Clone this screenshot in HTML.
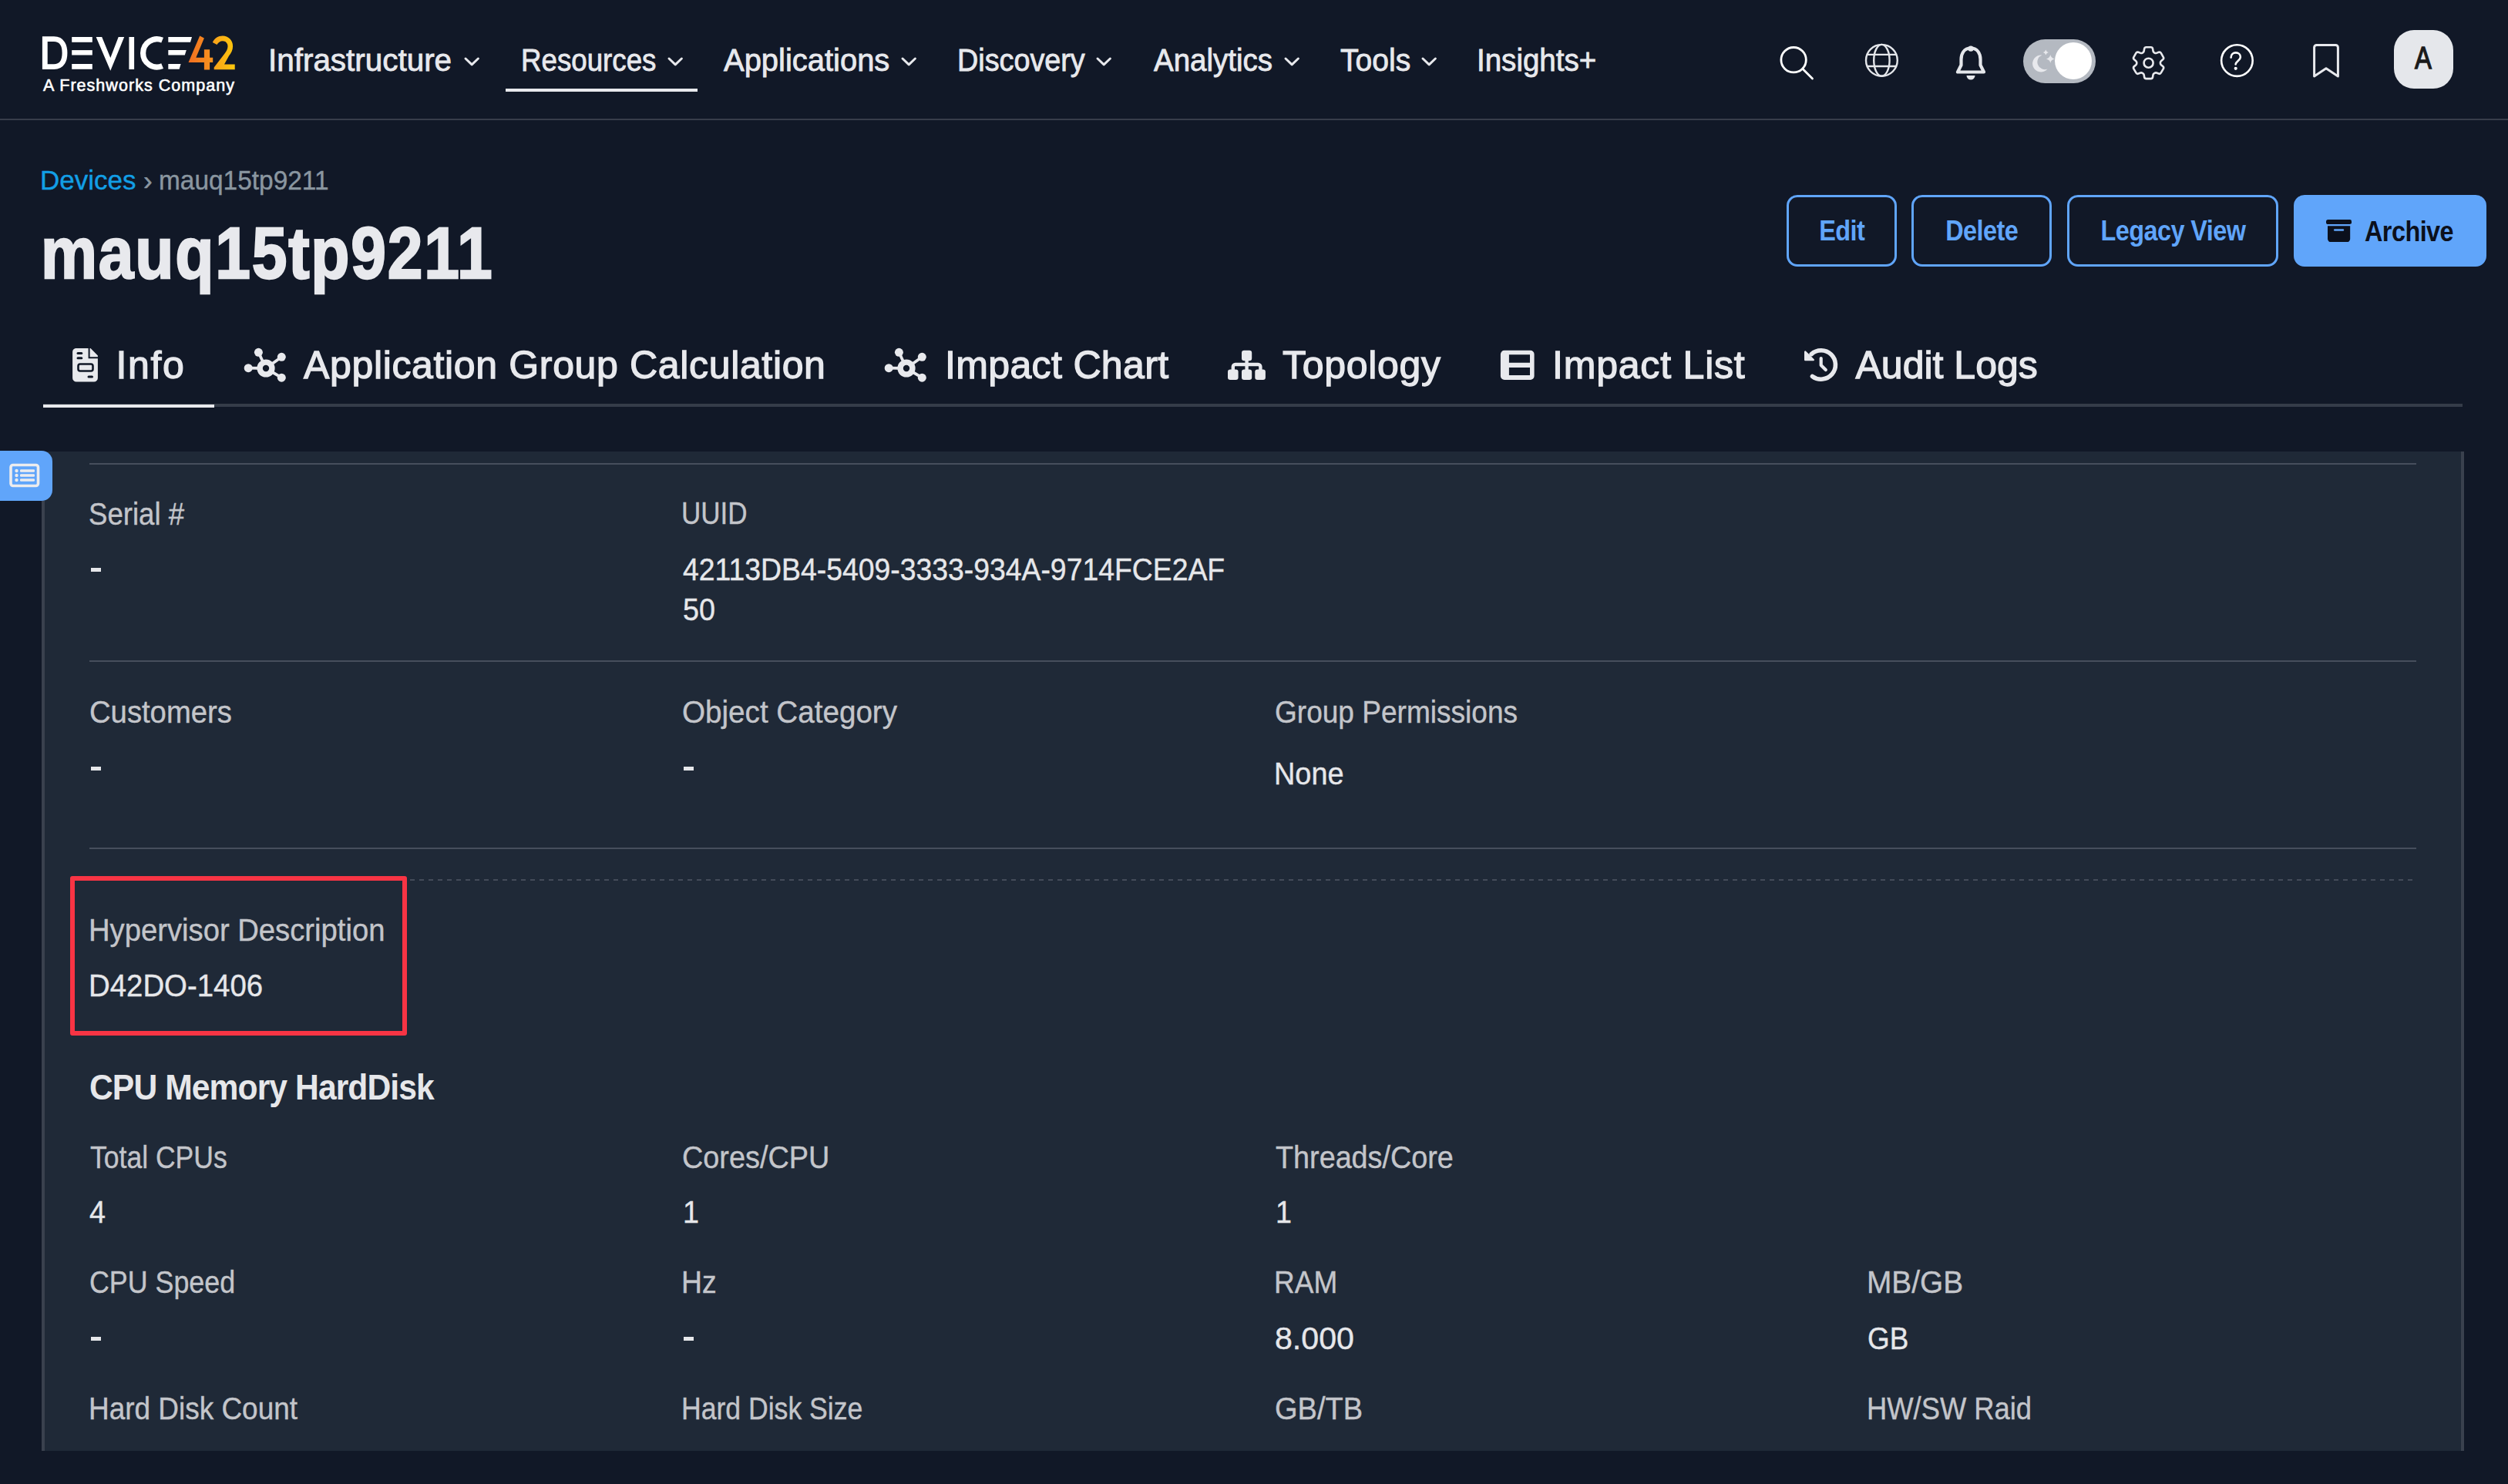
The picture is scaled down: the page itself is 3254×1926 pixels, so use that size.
<!DOCTYPE html>
<html><head><meta charset="utf-8">
<style>
*{margin:0;padding:0;box-sizing:border-box}
html,body{width:3254px;height:1926px;overflow:hidden;background:#111827;font-family:"Liberation Sans",sans-serif;color:#e5e7eb}
.a{position:absolute;white-space:nowrap;line-height:1}
#hdr{position:absolute;left:0;top:0;width:3254px;height:156px;background:#111827;border-bottom:2px solid #383d4a}
.nav{font-size:40px;color:#e8e9ed;-webkit-text-stroke:0.8px #e8e9ed}
.chev{position:absolute;width:22px;height:13px}
.tab{font-size:50px;color:#e8e9ed;-webkit-text-stroke:1.3px #e8e9ed}
.lbl{font-size:41px;color:#c3c5ca;-webkit-text-stroke:0.4px #c3c5ca;transform-origin:0 0}
.val{font-size:41px;color:#e6e7ea;-webkit-text-stroke:0.4px #e6e7ea;transform-origin:0 0}
.btn{position:absolute;top:253px;height:93px;border:3px solid #60a5fa;border-radius:14px;color:#60a5fa;font-weight:bold;font-size:36px;display:flex;align-items:center;justify-content:center}
.btn span{display:inline-block;letter-spacing:-0.6px;transform:scaleX(0.9)}
.hl{position:absolute;left:116px;width:3019px;height:2px;background:#464e5c}
</style></head>
<body>
<div id="hdr"></div>

<!-- logo -->
<svg class="a" style="left:0;top:0" width="320" height="140" viewBox="0 0 320 140">
  <defs>
    <linearGradient id="g4" x1="0" y1="0" x2="1" y2="0">
      <stop offset="0" stop-color="#f26f21"/><stop offset="1" stop-color="#f7931e"/>
    </linearGradient>
    <linearGradient id="g2" x1="0" y1="0" x2="1" y2="0">
      <stop offset="0" stop-color="#f9a11b"/><stop offset="1" stop-color="#fdc70c"/>
    </linearGradient>
  </defs>
  <g fill="#ffffff">
    <path d="M58.3,50.7 H70 C81,50.7 84,60 84,68.7 C84,77.5 81,86.6 70,86.6 H58.3 Z" fill="none" stroke="#fff" stroke-width="6.8"/>
    <rect x="93.2" y="48" width="26.6" height="6.8"/>
    <rect x="93.2" y="65.1" width="26.6" height="6.4"/>
    <rect x="93.2" y="83" width="26.6" height="6.8"/>
    <polygon points="124.6,48 132.2,48 143.3,75.1 153.7,48 161.2,48 143.3,91.8"/>
    <rect x="167.4" y="48" width="6.7" height="42"/>
    <path d="M210.63,52.18 A18.1,18.1 0 1 0 210.63,85.62" fill="none" stroke="#fff" stroke-width="7.2"/>
    <polygon points="218.3,48 249,48 247,54.8 218.3,54.8"/>
    <polygon points="218.3,65.1 241.8,65.1 239.8,71.5 218.3,71.5"/>
    <polygon points="218.3,83 234.6,83 232.6,89.8 218.3,89.8"/>
  </g>
  <path fill="url(#g4)" d="M259.2,46.4 L264.9,49.4 L254.3,74.7 H264.9 V64.2 H272.1 V74.7 H276.2 V81.1 H272.1 V90.6 H264.9 V81.1 H244.5 Z"/>
  <path fill="url(#g2)" d="M275.8,55.1 C278,50 283,46.6 289,46.6 C296,46.6 302.1,52 302.1,60 C302.1,65 300,69 297,72.5 L291,83.6 H304.7 V90.2 H277.7 V87.5 L291.5,69.5 C293.8,66.5 295.5,63.5 295.5,60 C295.5,56 292.8,53.2 289,53.2 C285.5,53.2 282.8,55.3 281.5,58.1 Z"/>
  <text x="56" y="118.4" font-family="Liberation Sans" font-size="21.5" fill="#fff" stroke="#fff" stroke-width="0.6" textLength="248" lengthAdjust="spacing">A Freshworks Company</text>
</svg>

<!-- nav -->
<div class="a nav" style="left:348.0px;top:58px;transform:scaleX(1.0104);transform-origin:0 0">Infrastructure</div>
<div class="a nav" style="left:675.5px;top:58px;transform:scaleX(0.9173);transform-origin:0 0">Resources</div>
<div class="a nav" style="left:938.5px;top:58px;transform:scaleX(0.9982);transform-origin:0 0">Applications</div>
<div class="a nav" style="left:1241.5px;top:58px;transform:scaleX(0.944);transform-origin:0 0">Discovery</div>
<div class="a nav" style="left:1496.5px;top:58px;transform:scaleX(0.9615);transform-origin:0 0">Analytics</div>
<div class="a nav" style="left:1738.5px;top:58px;transform:scaleX(0.9764);transform-origin:0 0">Tools</div>
<div class="a nav" style="left:1916.0px;top:58px;transform:scaleX(0.9629);transform-origin:0 0">Insights+</div>
<svg class="chev" style="left:601.1px;top:72.5px" viewBox="0 0 22 13"><path d="M3,3 L11.2,10.8 L19.4,3" fill="none" stroke="#e8e9ed" stroke-width="3" stroke-linecap="round" stroke-linejoin="round"/></svg>
<svg class="chev" style="left:864.5px;top:72.5px" viewBox="0 0 22 13"><path d="M3,3 L11.2,10.8 L19.4,3" fill="none" stroke="#e8e9ed" stroke-width="3" stroke-linecap="round" stroke-linejoin="round"/></svg>
<svg class="chev" style="left:1168.1px;top:72.5px" viewBox="0 0 22 13"><path d="M3,3 L11.2,10.8 L19.4,3" fill="none" stroke="#e8e9ed" stroke-width="3" stroke-linecap="round" stroke-linejoin="round"/></svg>
<svg class="chev" style="left:1421.3px;top:72.5px" viewBox="0 0 22 13"><path d="M3,3 L11.2,10.8 L19.4,3" fill="none" stroke="#e8e9ed" stroke-width="3" stroke-linecap="round" stroke-linejoin="round"/></svg>
<svg class="chev" style="left:1664.5px;top:72.5px" viewBox="0 0 22 13"><path d="M3,3 L11.2,10.8 L19.4,3" fill="none" stroke="#e8e9ed" stroke-width="3" stroke-linecap="round" stroke-linejoin="round"/></svg>
<svg class="chev" style="left:1843.4px;top:72.5px" viewBox="0 0 22 13"><path d="M3,3 L11.2,10.8 L19.4,3" fill="none" stroke="#e8e9ed" stroke-width="3" stroke-linecap="round" stroke-linejoin="round"/></svg>
<div class="a" style="left:656px;top:115px;width:249px;height:4px;background:#e8e9ed"></div>


<!-- header icons -->
<svg class="a" style="left:2300px;top:50px" width="60" height="60" viewBox="2300 50 60 60">
  <circle cx="2327.1" cy="77.7" r="16.2" fill="none" stroke="#fff" stroke-width="2.8"/>
  <line x1="2339" y1="89.6" x2="2351.5" y2="102" stroke="#fff" stroke-width="2.8" stroke-linecap="round"/>
</svg>
<svg class="a" style="left:2410px;top:45px" width="64" height="66" viewBox="2410 45 64 66">
  <g fill="none" stroke="#e5e7eb" stroke-width="2.4">
    <circle cx="2441.4" cy="78.3" r="20.4"/>
    <ellipse cx="2441.4" cy="78.3" rx="10.2" ry="20.4"/>
    <line x1="2423" y1="70.9" x2="2460" y2="70.9"/>
    <line x1="2423" y1="86" x2="2460" y2="86"/>
  </g>
</svg>
<svg class="a" style="left:2530px;top:50px" width="54" height="60" viewBox="2530 50 54 60">
  <path d="M2557,62.5 C2548,62.5 2544.5,70 2544.5,77 V84.5 L2540,93.5 H2574 L2569.5,84.5 V77 C2569.5,70 2566,62.5 2557,62.5 Z" fill="none" stroke="#e5e7eb" stroke-width="4.2" stroke-linejoin="round"/>
  <circle cx="2557" cy="63.2" r="3.6" fill="#e5e7eb"/>
  <path d="M2551.5,98 H2562.5 A5.5,5.5 0 0 1 2551.5,98 Z" fill="#e5e7eb"/>
</svg>
<div class="a" style="left:2624.7px;top:51px;width:94.3px;height:57px;border-radius:28.5px;background:#b4b9c1"></div>
<div class="a" style="left:2666px;top:55px;width:48px;height:48px;border-radius:50%;background:#ffffff"></div>
<svg class="a" style="left:2630px;top:60px" width="40" height="40" viewBox="2630 60 40 40">
  <path d="M2649.5,71.5 A11,11 0 1 0 2656.5,89.5 A9,9 0 0 1 2649.5,71.5 Z" fill="#e8e9ed"/>
  <path d="M2654.3,64.5 Q2655,67.3 2657.8,68 Q2655,68.7 2654.3,71.5 Q2653.6,68.7 2650.8,68 Q2653.6,67.3 2654.3,64.5 Z" fill="#e8e9ed"/>
  <path d="M2660.3,71 Q2661.2,75.5 2665.7,76.4 Q2661.2,77.3 2660.3,81.8 Q2659.4,77.3 2654.9,76.4 Q2659.4,75.5 2660.3,71 Z" fill="#e8e9ed"/>
</svg>
<svg class="a" style="left:2755px;top:50px" width="66" height="66" viewBox="2755 50 66 66">
  <g transform="translate(2787.6,81.7) scale(2.27) translate(-12,-12)" fill="none" stroke="#e8e9ed" stroke-width="1.15" stroke-linejoin="round">
  <path d="M9.594 3.94c.09-.542.56-.94 1.11-.94h2.593c.55 0 1.02.398 1.11.94l.213 1.281c.063.374.313.686.645.87.074.04.147.083.22.127.325.196.72.257 1.075.124l1.217-.456a1.125 1.125 0 0 1 1.37.49l1.296 2.247a1.125 1.125 0 0 1-.26 1.431l-1.003.827c-.293.241-.438.613-.43.992a7.723 7.723 0 0 1 0 .255c-.008.378.137.75.43.991l1.004.827c.424.35.534.955.26 1.43l-1.298 2.247a1.125 1.125 0 0 1-1.369.491l-1.217-.456c-.355-.133-.75-.072-1.076.124a6.47 6.470 0 0 1-.22.128c-.331.183-.581.495-.644.869l-.213 1.281c-.09.543-.56.94-1.110.94h-2.594c-.55 0-1.019-.398-1.11-.94l-.213-1.281c-.062-.374-.312-.686-.644-.87a6.52 6.52 0 0 1-.22-.127c-.325-.196-.72-.257-1.076-.124l-1.217.456a1.125 1.125 0 0 1-1.369-.49l-1.297-2.247a1.125 1.125 0 0 1 .26-1.431l1.004-.827c.292-.24.437-.613.43-.991a6.932 6.932 0 0 1 0-.255c.007-.38-.138-.751-.43-.992l-1.004-.827a1.125 1.125 0 0 1-.26-1.43l1.297-2.247a1.125 1.125 0 0 1 1.37-.491l1.216.456c.356.133.751.072 1.076-.124.072-.044.146-.086.22-.128.332-.183.582-.495.644-.869l.214-1.28Z"/>
  <circle cx="12" cy="12" r="2.65"/>
  </g>
</svg>
<svg class="a" style="left:2875px;top:51px" width="56" height="56" viewBox="2875 51 56 56">
  <circle cx="2902.4" cy="78.6" r="20.3" fill="none" stroke="#fff" stroke-width="2.6"/>
  <path d="M2894.6,74.6 C2894.6,70.6 2897.6,68.4 2900.8,68.4 C2904.2,68.4 2906.9,70.6 2906.9,74 C2906.9,78.4 2901,79.2 2900.6,83.4" fill="none" stroke="#fff" stroke-width="2.6" stroke-linecap="round"/>
  <circle cx="2900.7" cy="88.8" r="2.1" fill="#fff"/>
</svg>
<svg class="a" style="left:2995px;top:50px" width="46" height="56" viewBox="2995 50 46 56">
  <path d="M3002.6,99 V61.5 A3,3 0 0 1 3005.6,58.5 H3030.4 A3,3 0 0 1 3033.4,61.5 V99 L3018,88.8 Z" fill="none" stroke="#e8e9ed" stroke-width="3" stroke-linejoin="round"/>
</svg>
<div class="a" style="left:3105.6px;top:38.7px;width:77.6px;height:76.5px;border-radius:26px;background:#e5e7eb"></div>
<div class="a" style="left:3132.5px;top:55.4px;font-size:40px;color:#1a1a1a;-webkit-text-stroke:1.3px #1a1a1a;transform:scaleX(0.82);transform-origin:0 0">A</div>

<!-- breadcrumb + title -->
<div class="a" style="left:52px;top:216px;font-size:35px;color:#129fe6;-webkit-text-stroke:0.4px #129fe6">Devices</div>
<div class="a" style="left:186px;top:216px;font-size:35px;color:#8a96a0;-webkit-text-stroke:0.6px #8a96a0">›</div>
<div class="a" style="left:206px;top:216px;font-size:35px;color:#8a96a0;-webkit-text-stroke:0.4px #8a96a0;transform:scaleX(0.955);transform-origin:0 0">mauq15tp9211</div>
<div class="a" style="left:53px;top:282px;font-size:94px;font-weight:bold;color:#e8e9ed;-webkit-text-stroke:2.4px #e8e9ed;letter-spacing:2px;transform:scaleX(0.8745);transform-origin:0 0">mauq15tp9211</div>

<!-- buttons -->
<div class="btn" style="left:2318px;width:143px"><span>Edit</span></div>
<div class="btn" style="left:2480px;width:182px"><span>Delete</span></div>
<div class="btn" style="left:2682px;width:274px"><span>Legacy View</span></div>
<div class="btn" style="left:2976px;width:250px;background:#60a5fa;color:#0b101c;border-color:#60a5fa;display:block"></div>
<svg class="a" style="left:3017.9px;top:284.8px" width="33.2" height="29.2" viewBox="0 0 33.2 29.2"><rect x="0" y="0" width="33.2" height="6" rx="2.6" fill="#0b101c"/><path d="M2,8.3 H31.2 V25 A4.2,4.2 0 0 1 27,29.2 H6.2 A4.2,4.2 0 0 1 2,25 Z" fill="#0b101c"/><rect x="10" y="12.2" width="13.2" height="2.5" rx="1.25" fill="#60a5fa"/></svg>
<div class="a" style="left:3068px;top:283px;font-size:36px;font-weight:bold;color:#0b101c;letter-spacing:-0.6px;transform:scaleX(0.9);transform-origin:0 0">Archive</div>


<!-- tabs -->
<svg class="a" style="left:90px;top:448px" width="42" height="52" viewBox="90 448 42 52">
  <path d="M98,452 H117.5 L126.9,461.5 V490.5 A5,5 0 0 1 121.9,495.6 H99.1 A5,5 0 0 1 94.1,490.5 V457 A5,5 0 0 1 98,452 Z" fill="#e8e9ed"/>
  <path d="M115.6,452 V464.3 H127" fill="none" stroke="#111827" stroke-width="2"/>
  <rect x="99.5" y="457" width="7.8" height="3" rx="1.5" fill="#111827"/>
  <rect x="99.5" y="463.3" width="7.8" height="3" rx="1.5" fill="#111827"/>
  <rect x="101.5" y="472.5" width="19" height="9" rx="2.5" fill="none" stroke="#111827" stroke-width="2.6"/>
  <rect x="113.5" y="487.5" width="7.5" height="3" rx="1.5" fill="#111827"/>
</svg>
<svg class="a" style="left:310px;top:445px" width="68" height="56" viewBox="310 445 68 56">
  <g stroke="#e8e9ed" stroke-width="3.8">
    <line x1="345" y1="478" x2="335.4" y2="457.3"/><line x1="345" y1="478" x2="365.3" y2="463.3"/>
    <line x1="345" y1="478" x2="322.2" y2="477.7"/><line x1="345" y1="478" x2="365.3" y2="490.2"/>
  </g>
  <g fill="#e8e9ed">
    <circle cx="335.4" cy="457.3" r="5.5"/><circle cx="365.3" cy="463.3" r="5.5"/>
    <circle cx="322.2" cy="477.7" r="5.5"/><circle cx="365.3" cy="490.2" r="5.5"/>
    <circle cx="345" cy="478" r="11.6"/>
  </g>
  <circle cx="345" cy="478" r="4.2" fill="#111827"/>
</svg>
<svg class="a" style="left:1141.2px;top:445px" width="68" height="56" viewBox="310 445 68 56">
  <g stroke="#e8e9ed" stroke-width="3.8">
    <line x1="345" y1="478" x2="335.4" y2="457.3"/><line x1="345" y1="478" x2="365.3" y2="463.3"/>
    <line x1="345" y1="478" x2="322.2" y2="477.7"/><line x1="345" y1="478" x2="365.3" y2="490.2"/>
  </g>
  <g fill="#e8e9ed">
    <circle cx="335.4" cy="457.3" r="5.5"/><circle cx="365.3" cy="463.3" r="5.5"/>
    <circle cx="322.2" cy="477.7" r="5.5"/><circle cx="365.3" cy="490.2" r="5.5"/>
    <circle cx="345" cy="478" r="11.6"/>
  </g>
  <circle cx="345" cy="478" r="4.2" fill="#111827"/>
</svg>
<svg class="a" style="left:1588px;top:450px" width="58" height="48" viewBox="1588 450 58 48">
  <g fill="#e8e9ed">
    <rect x="1611" y="454.8" width="13.2" height="13.4" rx="3.2"/>
    <rect x="1593" y="479.4" width="13.6" height="13.6" rx="3.2"/>
    <rect x="1611" y="479.4" width="13.2" height="13.6" rx="3.2"/>
    <rect x="1628.3" y="479.4" width="13.6" height="13.6" rx="3.2"/>
  </g>
  <path d="M1617.6,466 V483 M1599.8,483 V476 A3,3 0 0 1 1602.8,473 H1632.4 A3,3 0 0 1 1635.4,476 V483" fill="none" stroke="#e8e9ed" stroke-width="4.4"/>
</svg>
<svg class="a" style="left:1942px;top:450px" width="54" height="48" viewBox="1942 450 54 48">
  <path fill-rule="evenodd" fill="#e8e9ed" d="M1952,454.8 H1985.6 A5,5 0 0 1 1990.6,459.8 V488 A5,5 0 0 1 1985.6,493 H1952 A5,5 0 0 1 1946.9,488 V459.8 A5,5 0 0 1 1952,454.8 Z M1957.9,460.3 V470.7 H1985 V460.3 Z M1957.9,477.1 V487 H1985 V477.1 Z"/>
</svg>
<svg class="a" style="left:2336px;top:448px" width="54" height="52" viewBox="2336 448 54 52">
  <path d="M2350.2,459.6 A18.7,18.7 0 1 1 2351.45,488.4" fill="none" stroke="#e8e9ed" stroke-width="5.6" stroke-linecap="round"/>
  <path d="M2342.2,456.6 V467 H2352.8 Z" fill="#e8e9ed" stroke="#e8e9ed" stroke-width="2.4" stroke-linejoin="round"/>
  <path d="M2362.7,465 V474 L2368.8,480" fill="none" stroke="#e8e9ed" stroke-width="4.2" stroke-linecap="round" stroke-linejoin="round"/>
</svg>
<div class="a tab" style="left:150.5px;top:449px;letter-spacing:1.6px">Info</div>
<div class="a tab" style="left:394px;top:449px;letter-spacing:0.65px">Application Group Calculation</div>
<div class="a tab" style="left:1226px;top:449px;letter-spacing:0.35px">Impact Chart</div>
<div class="a tab" style="left:1664px;top:449px;letter-spacing:0.7px">Topology</div>
<div class="a tab" style="left:2014px;top:449px;letter-spacing:0.8px">Impact List</div>
<div class="a tab" style="left:2407.5px;top:449px">Audit Logs</div>
<div class="a" style="left:56px;top:524px;width:3139px;height:4px;background:#353c49"></div>
<div class="a" style="left:56px;top:525px;width:222px;height:4px;background:#e8e9ed"></div>

<!-- panel -->
<div class="a" style="left:54px;top:586px;width:3143px;height:1297px;background:#1f2937"></div>
<div class="a" style="left:54px;top:650px;width:4px;height:1233px;background:#3a414e"></div>
<div class="a" style="left:3193px;top:586px;width:4px;height:1297px;background:#3a414e"></div>
<div class="a" style="left:0;top:585px;width:68px;height:65px;background:#60a5fa;border-radius:0 14px 14px 0"></div>
<svg class="a" style="left:10px;top:598px" width="44" height="38" viewBox="10 598 44 38">
  <rect x="14" y="603.5" width="35.5" height="27" rx="3" fill="none" stroke="#ececee" stroke-width="3.6"/>
  <g fill="#ececee">
    <circle cx="21.5" cy="611" r="2.2"/><circle cx="21.5" cy="617" r="2.2"/><circle cx="21.5" cy="623" r="2.2"/>
    <rect x="26" y="609.3" width="19" height="3.4" rx="1.2"/><rect x="26" y="615.3" width="19" height="3.4" rx="1.2"/><rect x="26" y="621.3" width="19" height="3.4" rx="1.2"/>
  </g>
</svg>
<div class="hl" style="top:601px"></div>
<div class="hl" style="top:857px"></div>
<div class="hl" style="top:1100px"></div>
<div class="a" style="left:532px;top:1141px;width:2603px;height:2px;background:repeating-linear-gradient(to right,#444b59 0 6px,transparent 6px 12px)"></div>
<div class="a" style="left:91px;top:1137px;width:437px;height:207px;border:6px solid #f83444;border-radius:3px"></div>

<!-- content -->
<div class="a lbl" style="left:115.0px;top:647.3px;transform:scaleX(0.8921)">Serial #</div>
<div class="a lbl" style="left:884.0px;top:646.3px;transform:scaleX(0.8531)">UUID</div>
<div class="a val" style="left:886.0px;top:718.9px;transform:scaleX(0.9109)">42113DB4-5409-3333-934A-9714FCE2AF</div>
<div class="a val" style="left:886px;top:771.3px;transform:scaleX(0.92)">50</div>
<div class="a lbl" style="left:115.8px;top:904.0px;transform:scaleX(0.9326)">Customers</div>
<div class="a lbl" style="left:885.0px;top:904.3px;transform:scaleX(0.9419)">Object Category</div>
<div class="a lbl" style="left:1654.0px;top:904.3px;transform:scaleX(0.9037)">Group Permissions</div>
<div class="a val" style="left:1653.0px;top:984.3px;transform:scaleX(0.9234)">None</div>
<div class="a lbl" style="left:115.0px;top:1187.3px;transform:scaleX(0.9322)">Hypervisor Description</div>
<div class="a val" style="left:115.0px;top:1258.8px;transform:scaleX(0.9358)">D42DO-1406</div>
<div class="a lbl" style="left:116.6px;top:1481.7px;transform:scaleX(0.8663)">Total CPUs</div>
<div class="a lbl" style="left:885.0px;top:1481.7px;transform:scaleX(0.9225)">Cores/CPU</div>
<div class="a lbl" style="left:1655.0px;top:1481.7px;transform:scaleX(0.9208)">Threads/Core</div>
<div class="a val" style="left:116.4px;top:1553.3px;transform:scaleX(0.92)">4</div>
<div class="a val" style="left:886px;top:1553.3px;transform:scaleX(0.92)">1</div>
<div class="a val" style="left:1655px;top:1553.3px;transform:scaleX(0.92)">1</div>
<div class="a lbl" style="left:115.6px;top:1644.3px;transform:scaleX(0.8732)">CPU Speed</div>
<div class="a lbl" style="left:884.0px;top:1644.3px;transform:scaleX(0.9098)">Hz</div>
<div class="a lbl" style="left:1653.0px;top:1644.3px;transform:scaleX(0.9024)">RAM</div>
<div class="a lbl" style="left:2422.4px;top:1644.3px;transform:scaleX(0.9469)">MB/GB</div>
<div class="a val" style="left:1654.0px;top:1717.0px;transform:scaleX(1.0026)">8.000</div>
<div class="a val" style="left:2423.4px;top:1717.0px;transform:scaleX(0.8999)">GB</div>
<div class="a lbl" style="left:114.6px;top:1808.3px;transform:scaleX(0.9011)">Hard Disk Count</div>
<div class="a lbl" style="left:884.0px;top:1808.3px;transform:scaleX(0.8678)">Hard Disk Size</div>
<div class="a lbl" style="left:1654.0px;top:1808.3px;transform:scaleX(0.9271)">GB/TB</div>
<div class="a lbl" style="left:2422.4px;top:1808.3px;transform:scaleX(0.8865)">HW/SW Raid</div>
<div class="a" style="left:117.9px;top:736.5px;width:13px;height:5px;background:#e6e7ea"></div>
<div class="a" style="left:117.9px;top:995.2px;width:13px;height:5px;background:#e6e7ea"></div>
<div class="a" style="left:887px;top:995.2px;width:13px;height:5px;background:#e6e7ea"></div>
<div class="a" style="left:117.9px;top:1735px;width:13px;height:5px;background:#e6e7ea"></div>
<div class="a" style="left:887px;top:1735px;width:13px;height:5px;background:#e6e7ea"></div>
<div class="a" style="left:116.4px;top:1388.1px;font-size:46px;font-weight:bold;color:#e6e7ea;letter-spacing:-1px;transform:scaleX(0.927);transform-origin:0 0">CPU Memory HardDisk</div>
<!-- /content -->








</body></html>
